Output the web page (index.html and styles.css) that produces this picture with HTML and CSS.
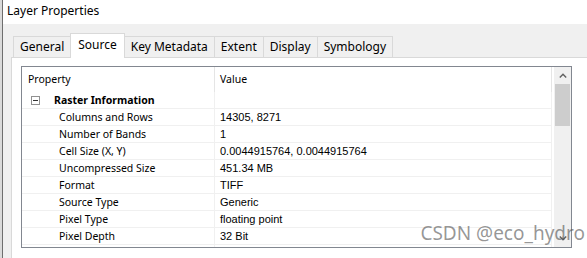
FILE: index.html
```html
<!DOCTYPE html>
<html lang="en">
<head>
    <meta charset="UTF-8">
    <title>Layer Properties</title>
    <link rel="stylesheet" href="styles.css">
</head>
<body>
    <div class="window">
        <!-- Title Bar -->
        <div class="titlebar">Layer Properties</div>

        <div class="content">
            <!-- Tabs -->
            <div class="tabs">
                <div class="tab">General</div>
                <div class="tab active">Source</div>
                <div class="tab">Key Metadata</div>
                <div class="tab">Extent</div>
                <div class="tab">Display</div>
                <div class="tab">Symbology</div>
            </div>

            <!-- Source Panel -->
            <div class="panel">
                <div class="list">
                    <div class="grid">
                        <div class="row head">
                            <div class="cell prop">Property</div>
                            <div class="cell value">Value</div>
                        </div>
                        <div class="row group">
                            <div class="cell prop"><span class="toggle"></span>Raster Information</div>
                            <div class="cell value"></div>
                        </div>
                        <div class="row">
                            <div class="cell prop">Columns and Rows</div>
                            <div class="cell value">14305, 8271</div>
                        </div>
                        <div class="row">
                            <div class="cell prop">Number of Bands</div>
                            <div class="cell value">1</div>
                        </div>
                        <div class="row">
                            <div class="cell prop">Cell Size (X, Y)</div>
                            <div class="cell value">0.0044915764, 0.0044915764</div>
                        </div>
                        <div class="row">
                            <div class="cell prop">Uncompressed Size</div>
                            <div class="cell value">451.34 MB</div>
                        </div>
                        <div class="row">
                            <div class="cell prop">Format</div>
                            <div class="cell value">TIFF</div>
                        </div>
                        <div class="row">
                            <div class="cell prop">Source Type</div>
                            <div class="cell value">Generic</div>
                        </div>
                        <div class="row">
                            <div class="cell prop">Pixel Type</div>
                            <div class="cell value">floating point</div>
                        </div>
                        <div class="row">
                            <div class="cell prop">Pixel Depth</div>
                            <div class="cell value">32 Bit</div>
                        </div>
                        <div class="row">
                            <div class="cell prop">NoData Value</div>
                            <div class="cell value">-3.402823e+038</div>
                        </div>
                    </div>
                    <div class="scrollbar">
                        <div class="arrow">
                            <svg width="8" height="5" viewBox="0 0 8 5"><path d="M0.8 4.4 L4 1.2 L7.2 4.4" fill="none" stroke="#606060" stroke-width="1.4"/></svg>
                        </div>
                        <div class="thumb"></div>
                        <div class="track"></div>
                        <div class="arrow">
                            <svg width="8" height="5" viewBox="0 0 8 5"><path d="M0.8 0.6 L4 3.8 L7.2 0.6" fill="none" stroke="#606060" stroke-width="1.4"/></svg>
                        </div>
                    </div>
                </div>
                <div class="section">Data Source</div>
            </div>
        </div>

        <div class="watermark">CSDN @eco_hydro</div>
    </div>
</body>
</html>
```

FILE: styles.css
```css
/* General Reset */
* {
    margin: 0;
    padding: 0;
    box-sizing: border-box;
}

body {
    width: 587px;
    height: 258px;
    overflow: hidden;
    background-color: #dadada;
    font-family: "Noto Sans", "Liberation Sans", sans-serif;
    font-size: 12px;
    color: #000;
}

.window {
    position: relative;
    margin-left: 2px;
    height: 258px;
    overflow: hidden;
    border-left: 1px solid #6e6e6e;
    background-color: #f0f0f0;
}

/* Title Bar */
.titlebar {
    height: 24px;
    padding-left: 4px;
    line-height: 21px;
    background-color: #fff;
}

.content {
    padding: 9px 0 0 8px;
}

/* Tabs */
.tabs {
    display: flex;
    align-items: flex-end;
    padding-left: 2px;
    margin-bottom: -1px;
    position: relative;
    z-index: 1;
}

.tab {
    height: 22px;
    padding: 0 6px;
    line-height: 20px;
    border: 1px solid #d9d9d9;
    background-color: #f0f0f0;
    margin-left: -1px;
}

.tab:first-child {
    margin-left: 0;
}

.tab.active {
    height: 25px;
    line-height: 22px;
    padding: 0 7px;
    border-bottom: none;
    background-color: #fff;
}

/* Panel */
.panel {
    height: 201px;
    overflow: hidden;
    padding: 8px 0 0 9px;
    background-color: #fff;
    border: 1px solid #d9d9d9;
    border-right: none;
    border-bottom: none;
}

.list {
    display: flex;
    width: 551px;
    height: 182px;
    border: 1px solid #828790;
    overflow: hidden;
}

.grid {
    width: 532px;
    overflow: hidden;
}

.row {
    display: flex;
    height: 17px;
    line-height: 16px;
}

.cell {
    border-right: 1px solid #f0f0f0;
    border-bottom: 1px solid #f0f0f0;
    white-space: nowrap;
}

.cell.prop {
    width: 193px;
    padding-left: 37px;
    font-size: 10.5px;
}

.cell.value {
    width: 337px;
    padding-left: 5px;
    font-family: "Liberation Sans", sans-serif;
    font-size: 11px;
}

.row.head {
    height: 25px;
    line-height: 25px;
}

.row.head .cell {
    border-right-color: #e5e5e5;
    border-bottom: none;
    height: 25px;
    font-family: "Noto Sans", sans-serif;
    font-size: 10.5px;
}

.row.head .cell.prop {
    padding-left: 6px;
}

.row.group .cell.prop {
    display: flex;
    align-items: center;
    padding-left: 9px;
    font-weight: bold;
}

.toggle {
    position: relative;
    width: 9px;
    height: 9px;
    margin-right: 14px;
    border: 1px solid #919191;
}

.toggle::after {
    content: "";
    position: absolute;
    left: 1px;
    top: 3px;
    width: 5px;
    height: 1px;
    background-color: #333;
}

/* Scrollbar */
.scrollbar {
    display: flex;
    flex-direction: column;
    width: 17px;
    margin-left: 1px;
    background-color: #f0f0f0;
}

.arrow {
    height: 17px;
    display: flex;
    align-items: center;
    justify-content: center;
}

.thumb {
    height: 42px;
    margin: 0 1px;
    background-color: #cdcdcd;
}

.track {
    flex-grow: 1;
}

.section {
    margin-top: 7px;
    padding-left: 9px;
    line-height: 16px;
    font-size: 10.5px;
}

/* Watermark */
.watermark {
    position: absolute;
    right: 2px;
    top: 220px;
    font-size: 19px;
    color: rgba(80, 80, 80, 0.6);
}
```
